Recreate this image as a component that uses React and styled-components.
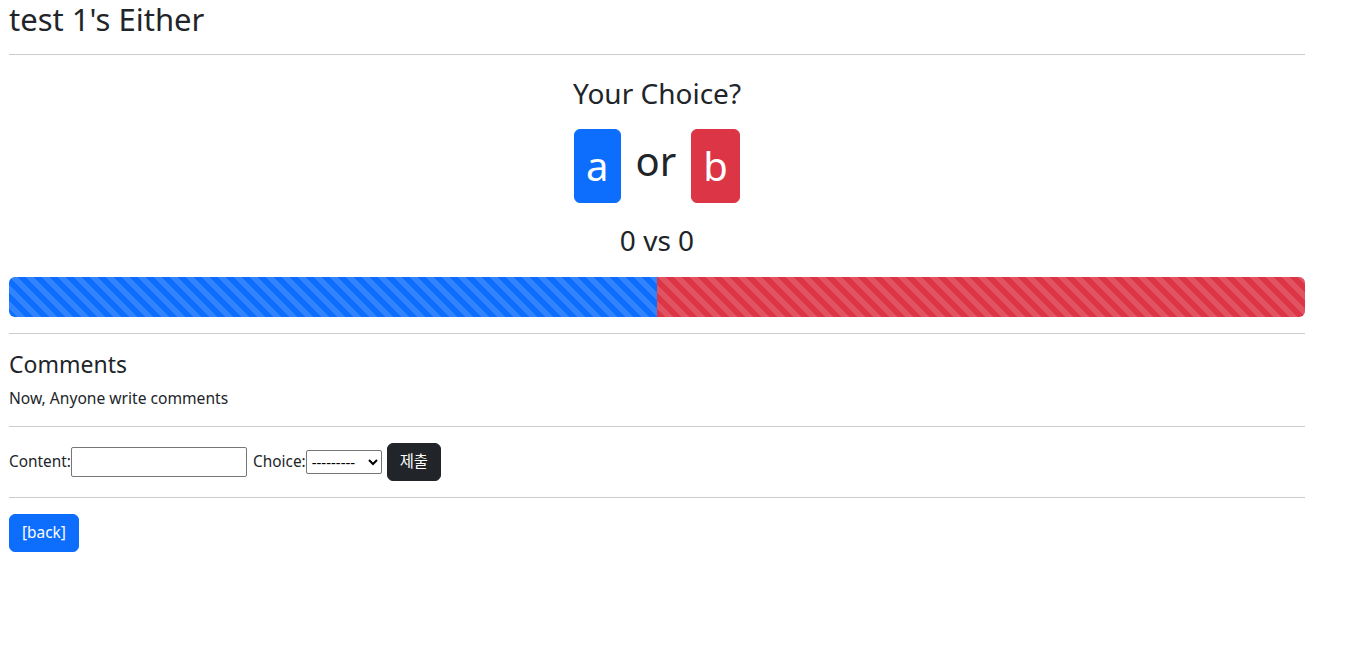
import React from "react";
import styled, { createGlobalStyle } from "styled-components";

const Global = createGlobalStyle`
  html, body { margin: 0; padding: 0; background: #fff; }
  body {
    font-family: "Noto Sans", "Noto Sans CJK KR", sans-serif;
    font-size: 16px;
    line-height: 1.5;
    color: #212529;
  }
  * { box-sizing: border-box; }
`;

const Page = styled.div`
  width: 1296px;
  margin-left: 9px;
`;

const Title = styled.h2`
  margin: 0;
  font-size: 31px;
  font-weight: 400;
  line-height: 38px;
`;

const Rule = styled.hr`
  margin: ${(p) => p.$top ?? 16}px 0 ${(p) => p.$bottom ?? 16}px;
  border: 0;
  border-top: 1px solid #ccc;
  height: 0;
`;

const Choice = styled.section`
  display: flex;
  flex-direction: column;
  align-items: center;
`;

const Question = styled.h3`
  margin: 0;
  font-size: 28px;
  font-weight: 400;
  line-height: 44px;
`;

const VoteRow = styled.div`
  display: flex;
  align-items: center;
  gap: 15px;
  margin-top: 14px;
  font-size: 40px;
  line-height: 48px;
`;

const Or = styled.span`
  margin-top: -10px;
`;

const VoteButton = styled.button`
  font-family: inherit;
  font-size: 40px;
  line-height: 60px;
  padding: 6px 11px;
  border: 1px solid ${(p) => p.$color};
  background: ${(p) => p.$color};
  color: #fff;
  border-radius: 6px;
  cursor: pointer;
`;

const Score = styled.h3`
  margin: 20px 0 0;
  font-size: 28px;
  font-weight: 400;
  line-height: 34px;
`;

const Progress = styled.div`
  display: flex;
  height: 40px;
  margin-top: 20px;
  border-radius: 6px;
  overflow: hidden;
  background: #e9ecef;
`;

const Bar = styled.div`
  height: 100%;
  background-color: ${(p) => p.$color};
  background-image: linear-gradient(
    45deg,
    rgba(255, 255, 255, 0.15) 25%,
    transparent 25%,
    transparent 50%,
    rgba(255, 255, 255, 0.15) 50%,
    rgba(255, 255, 255, 0.15) 75%,
    transparent 75%,
    transparent
  );
  background-size: 16px 16px;
`;

const SubTitle = styled.h4`
  margin: 0 0 8px;
  font-size: 23px;
  font-weight: 400;
  line-height: 28px;
`;

const Note = styled.p`
  margin: 0;
  font-size: 15.6px;
  line-height: 24px;
`;

const Form = styled.form`
  display: flex;
  align-items: center;
  margin: 0;
  font-size: 15.4px;
  line-height: 24px;
`;

const Label = styled.label`
  display: inline-block;
`;

const TextInput = styled.input`
  width: 176px;
  height: 30px;
  margin: 0 6px 0 0;
  font: inherit;
  padding: 1px 2px;
  border: 1px solid #767676;
  border-radius: 2px;
`;

const Select = styled.select`
  width: 76px;
  height: 24px;
  margin: 0 5px 0 0;
  padding: 0 1px;
  font-family: inherit;
  font-size: 15px;
  border: 1px solid #767676;
  border-radius: 2px;
  background: #fff;
  color: #000;
`;

const Button = styled.button`
  font-family: inherit;
  font-size: 15.4px;
  line-height: 24px;
  padding: 6px 12px;
  border: 1px solid ${(p) => p.$color};
  background: ${(p) => p.$color};
  color: #fff;
  border-radius: 6px;
  cursor: pointer;
`;

export default function App() {
  const a = 0;
  const b = 0;
  const total = a + b;
  const aPct = total ? (a / total) * 100 : 50;
  return (
    <>
      <Global />
      <Page>
        <Title>test 1's Either</Title>
        <Rule />
        <Choice>
          <Question>Your Choice?</Question>
          <VoteRow>
            <VoteButton $color="#0d6efd">a</VoteButton>
            <Or>or</Or>
            <VoteButton $color="#dc3545">b</VoteButton>
          </VoteRow>
          <Score>
            {a} vs {b}
          </Score>
        </Choice>
        <Progress>
          <Bar $color="#0d6efd" style={{ width: `${aPct}%` }} />
          <Bar $color="#dc3545" style={{ width: `${100 - aPct}%` }} />
        </Progress>
        <Rule />
        <SubTitle>Comments</SubTitle>
        <Note>Now, Anyone write comments</Note>
        <Rule />
        <Form onSubmit={(e) => e.preventDefault()}>
          <Label>Content:</Label>
          <TextInput type="text" />
          <Label>Choice:</Label>
          <Select defaultValue="">
            <option value="">---------</option>
            <option value="a">a</option>
            <option value="b">b</option>
          </Select>
          <Button $color="#212529" type="submit">제출</Button>
        </Form>
        <Rule />
        <Button $color="#0d6efd">[back]</Button>
      </Page>
    </>
  );
}
